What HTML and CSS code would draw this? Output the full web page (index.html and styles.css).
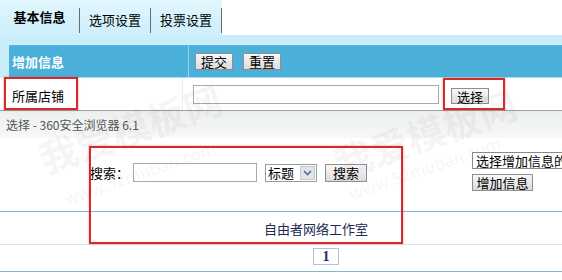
FILE: index.html
```html
<!DOCTYPE html>
<html lang="zh-CN">
<head>
  <meta charset="UTF-8">
  <title>基本信息</title>
  <link rel="stylesheet" href="styles.css">
</head>
<body>
<div class="page">

  <div class="tabbar">
    <div class="tabs">
      <div class="tab active">基本信息</div>
      <div class="tab">选项设置</div>
      <div class="tab">投票设置</div>
    </div>
  </div>

  <div class="band"></div>

  <div class="grid">
    <div class="head">
      <div class="cell-l">增加信息</div>
      <div class="cell-r">
        <button class="btn">提交</button>
        <button class="btn">重置</button>
      </div>
    </div>
    <div class="row">
      <div class="cell-l">所属店铺</div>
      <div class="cell-r">
        <input class="text shop">
        <button class="btn pick">选择</button>
      </div>
    </div>
  </div>

  <div class="popup">
    <div class="titlebar">选择 - 360安全浏览器 6.1</div>
    <div class="popbody">
      <div class="search">
        <span class="label">搜索：</span>
        <input class="text kw">
        <span class="selwrap">
          <select class="sel"><option>标题</option></select>
          <span class="arrow">
            <svg width="9" height="6" viewBox="0 0 9 6"><path d="M1 1 L4.5 4.5 L8 1" fill="none" stroke="#5a6e8c" stroke-width="1.6"/></svg>
          </span>
        </span>
        <button class="btn go">搜索</button>
      </div>
      <div class="side">
        <div class="picker">选择增加信息的</div>
        <button class="btn add">增加信息</button>
      </div>
    </div>
    <div class="footer">自由者网络工作室</div>
    <div class="pager"><span class="num">1</span></div>
  </div>

  <!-- watermark -->
  <div class="wm big w1">我爱模板网</div>
  <div class="wm big w2">我爱模板网</div>
  <div class="wm small w3">www.52muban.com</div>
  <div class="wm small w4">www.52muban.com</div>

  <!-- red annotation boxes -->
  <div class="mark m1"></div>
  <div class="mark m2"></div>
  <div class="mark m3"></div>

</div>
</body>
</html>
```

FILE: styles.css
```css
* { box-sizing: border-box; }
body { margin: 0; background: #fff; font: 13px "Noto Sans CJK SC", "Noto Sans", sans-serif; color: #000; }
.page { position: relative; width: 562px; height: 280px; overflow: hidden; }

/* tabs */
.tabbar { height: 35px; display: flex; }
.tabs { display: flex; background: linear-gradient(#e2f6fd, #cdeffb); }
.tab { width: 71px; height: 25px; margin-top: 8px; border-right: 1px solid #6b6b6b; text-align: center; line-height: 24px; }
.tab.active { width: 80px; font-weight: bold; line-height: 18px; }

.band { height: 10px; background: #c9eefa; }

/* form table */
.grid { background: #c9eefa; }
.head { display: flex; height: 33px; margin-left: 9px; background: #4bb0d9; border-top: 1px solid #5db7d8; border-bottom: 1px solid #a6dcef; }
.head .cell-l { width: 180px; padding-left: 3px; line-height: 31px; color: #fff; font-weight: bold; border-right: 1px solid #9ad5ec; }
.head .cell-r { display: flex; align-items: center; gap: 10px; padding-left: 6px; }

.row { display: flex; height: 32px; background: #fff; }
.row .cell-l { width: 183px; padding-left: 12px; line-height: 36px; border-right: 1px solid #ececec; }
.row .cell-r { display: flex; align-items: flex-start; }

.btn { font: 13px "Noto Sans CJK SC", "Noto Sans", sans-serif; height: 17px; width: 38px; padding: 0; line-height: 15px; color: #000; border: 1px solid #8e8e8e; background: linear-gradient(#f8f8f8, #dcdcdc); }
.text { height: 19px; border: 1px solid #a9a9a9; background: #fff; padding: 0 2px; }
.shop { width: 246px; margin: 7px 0 0 10px; }
.pick { margin: 10px 0 0 12px; height: 16px; }

/* popup window */
.popup { border-top: 1px solid #9aa0a3; }
.titlebar { height: 27px; padding-left: 6px; line-height: 27px; font-size: 12px; color: #555; background: linear-gradient(#eceff0, #f7f8f8); }
.popbody { display: grid; grid-template-columns: 472px 1fr; height: 73px; }
.search { display: flex; align-items: center; height: 19px; margin-top: 25px; padding-left: 90px; }
.label { width: 43px; }
.kw { width: 124px; }
.selwrap { display: flex; align-items: center; width: 52px; height: 18px; margin-left: 8px; border: 1px solid #9c9c9c; background: #fff; }
.sel { appearance: none; -webkit-appearance: none; border: 0; width: 34px; padding: 0 0 0 2px; font: 13px "Noto Sans CJK SC", sans-serif; background: transparent; }
.arrow { display: flex; align-items: center; justify-content: center; width: 15px; height: 14px; background: #e1e5ea; border: 1px solid #c0c7cf; }
.go { width: 42px; height: 18px; margin-left: 8px; }

.side { padding-top: 14px; }
.picker { height: 17px; padding-left: 3px; line-height: 15px; white-space: nowrap; border: 1px solid #8a8a8a; border-right: 0; }
.add { display: block; width: 61px; margin-top: 5px; }

.footer { height: 34px; padding-left: 264px; line-height: 34px; color: #1c2b4f; border-top: 1px solid #7ab8d4; border-bottom: 1px solid #d3e9f2; }
.pager { height: 27px; padding: 3px 0 0 313px; border-bottom: 1px solid #7ab8d4; }
.num { display: block; width: 26px; height: 17px; text-align: center; line-height: 16px; font: bold 14px "Liberation Serif", serif; color: #1d2a6b; border: 1px solid #a9c6d9; }

/* watermark */
.wm { position: absolute; white-space: nowrap; color: rgba(120, 90, 90, 0.07); transform: rotate(-19deg); pointer-events: none; }
.big { font-size: 38px; font-weight: bold; }
.small { font-size: 17px; }
.w1 { left: 35px; top: 100px; }
.w2 { left: 330px; top: 105px; }
.w3 { left: 60px; top: 160px; }
.w4 { left: 345px; top: 155px; }

/* annotations */
.mark { position: absolute; border: 2px solid #d42a2b; box-shadow: 0 0 2px rgba(220, 40, 40, 0.5); }
.m1 { left: 4px; top: 77px; width: 74px; height: 33px; }
.m2 { left: 443px; top: 78px; width: 62px; height: 32px; }
.m3 { left: 89px; top: 146px; width: 314px; height: 98px; }
```
